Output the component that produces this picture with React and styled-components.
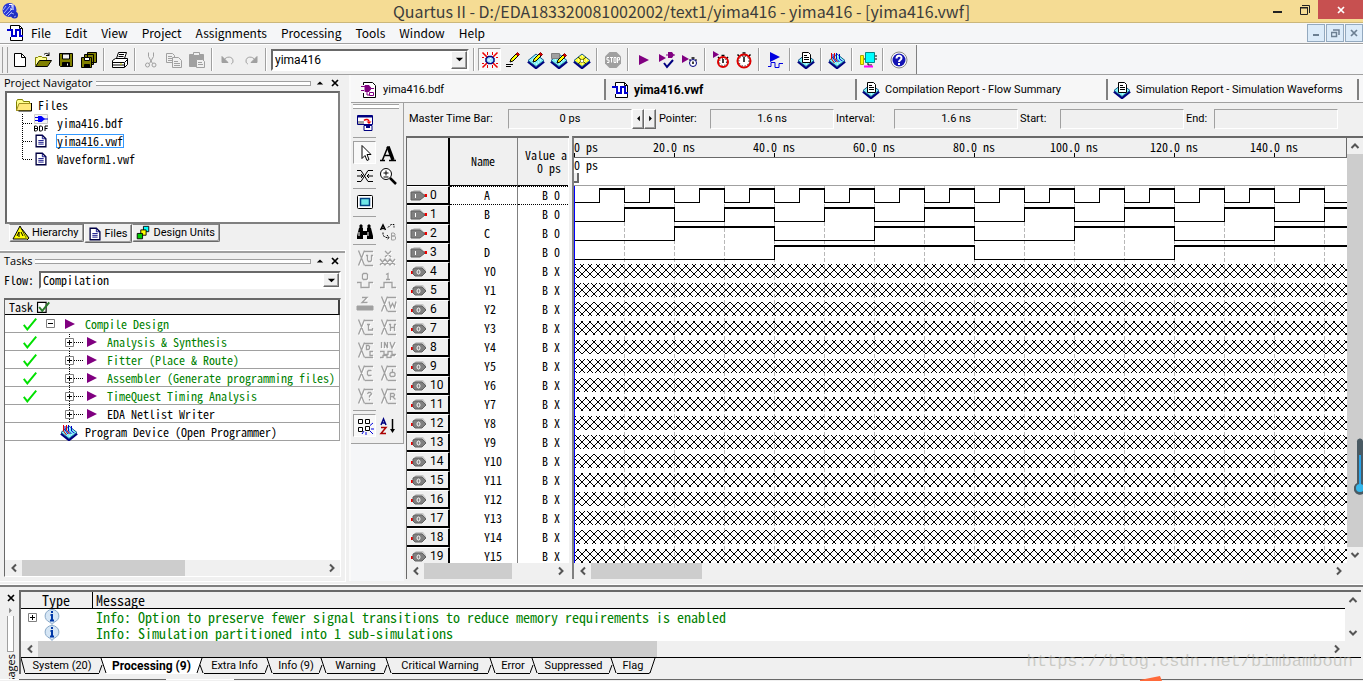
import React, { useEffect, useRef, useState } from "react";
import styled, { createGlobalStyle, css } from "styled-components";

const sans = `Roboto, "Liberation Sans", Arial, sans-serif`;
const ui = `"Noto Sans CJK SC", "Segoe UI", sans-serif`;
const caption = `"Open Sans", "Segoe UI", sans-serif`;
const mono = `"Noto Sans Mono CJK SC", "Liberation Mono", monospace`;

const Global = createGlobalStyle`
  *, *::before, *::after { box-sizing: border-box; }
  body { margin: 0; background: #f0f0f0; color: #000; font: 11px/14px ${sans}; }
  button, input, select { font: inherit; color: inherit; margin: 0; padding: 0; border: 0; background: none; border-radius: 0; }
  svg { display: block; flex: none; }
  table { border-spacing: 0; }
  td, th { padding: 0; font-weight: normal; text-align: left; }
`;

const sunken = css`
  border: 2px solid;
  border-color: #696969 #fff #fff #696969;
`;
const raised = css`
  border: 1px solid;
  border-color: #fff #696969 #696969 #fff;
  box-shadow: inset -1px -1px 0 #a0a0a0;
`;

/* ---------- window frame ---------- */
const Window = styled.div`
  position: relative;
  display: flex;
  flex-direction: column;
  height: 100vh;
  overflow: hidden;
`;
const TitleBar = styled.header`
  display: grid;
  grid-template-columns: 1fr auto 1fr;
  height: 23px;
  background: #f5dc94;
  border-bottom: 1px solid #cbb77c;
`;
const TitleText = styled.h1`
  margin: 0;
  font: 16px/22px ${ui};
  color: #3c3c3c;
  white-space: nowrap;
`;
const TitleIcon = styled.div`
  padding: 2px;
`;
const WindowButtons = styled.div`
  display: flex;
  justify-content: flex-end;
`;
const WindowButton = styled.button`
  display: flex;
  align-items: center;
  justify-content: center;
  width: ${(p) => (p.$close ? 45 : 27)}px;
  height: 19px;
  background: ${(p) => (p.$close ? "#c75050" : "none")};
`;
const MenuBar = styled.nav`
  display: flex;
  align-items: center;
  height: 21px;
  padding-left: 6px;
  background: #f5f6f8;
  border-bottom: 1px solid #a0a0a0;
`;
const MenuButton = styled.button`
  padding: 0 7px;
  font: 12px/18px ${ui};
`;
const MdiButtons = styled.div`
  display: flex;
  gap: 1px;
  margin-left: auto;
`;
const MdiButton = styled.button`
  display: flex;
  align-items: center;
  justify-content: center;
  width: 18px;
  height: 18px;
  background: #dcebf9;
  border: 1px solid #93a9bf;
`;

/* ---------- main toolbar ---------- */
const ToolbarRow = styled.div`
  display: flex;
  height: 31px;
  background: #f5f6f8;
  border-top: 1px solid #fff;
  border-bottom: 1px solid #a0a0a0;
`;
const Toolbar = styled.div`
  display: flex;
  align-items: center;
  padding: 0 6px 0 2px;
  background: #f0f0f0;
  border-right: 1px solid #808080;
`;
const Grip = styled.span`
  width: 6px;
  height: 26px;
  border: 1px solid #a0a0a0;
  border-width: 0 1px 0 1px;
`;
const ToolButton = styled.button`
  display: flex;
  align-items: center;
  justify-content: center;
  width: 23px;
  height: 23px;
  ${(p) => p.$pressed && css`background: #f8f8f8; border: 1px solid; border-color: #a0a0a0 #fff #fff #a0a0a0;`}
`;
const Separator = styled.span`
  width: 2px;
  height: 23px;
  margin: 0 3px;
  border-left: 1px solid #a0a0a0;
  border-right: 1px solid #fff;
`;
const ComboBox = styled.span`
  position: relative;
  display: flex;
  flex: ${(p) => (p.$wide ? 1 : "none")};
  width: ${(p) => (p.$wide ? "auto" : "198px")};
  height: ${(p) => (p.$wide ? 18 : 22)}px;
  margin: ${(p) => (p.$wide ? 0 : "0 1px")};
  background: #fff;
  ${sunken}
`;
const Select = styled.select`
  appearance: none;
  width: 100%;
  padding-left: 2px;
  font: ${(p) => (p.$mono ? `12px/14px ${mono}` : `12px/16px ${sans}`)};
  outline: none;
`;
const ComboArrow = styled.span`
  position: absolute;
  top: 0;
  right: 0;
  bottom: 0;
  display: flex;
  align-items: center;
  justify-content: center;
  width: 16px;
  background: #f0f0f0;
  pointer-events: none;
  ${raised}
`;

/* ---------- docks ---------- */
const Workspace = styled.div`
  display: flex;
  flex: 1;
  min-height: 0;
`;
const Dock = styled.aside`
  display: flex;
  flex-direction: column;
  flex: none;
  width: 351px;
  padding-right: 4px;
  border-right: 2px solid #fafafa;
`;
const DockPanel = styled.section`
  display: flex;
  flex-direction: column;
  flex: ${(p) => (p.$grow ? 1 : "none")};
  min-height: 0;
  padding: 0 4px;
  ${(p) => p.$grow && css`margin-top: 8px; padding-bottom: 4px; border-top: 2px solid #a0a0a0; outline: 1px solid #fff;`}
`;
const DockTitle = styled.header`
  display: flex;
  flex: none;
  align-items: center;
  gap: 3px;
  height: 16px;
`;
const DockHeading = styled.h2`
  margin: 0;
  font: 11px/16px ${caption};
`;
const DockRule = styled.span`
  flex: 1;
  height: 5px;
  border: 1px solid #a0a0a0;
  border-left: 0;
  background: #fff;
`;
const TinyButton = styled.button`
  display: flex;
  flex: none;
  align-items: center;
  justify-content: center;
  width: 12px;
  height: 12px;
`;
const TreeBox = styled.div`
  height: 133px;
  margin: 0 1px;
  padding: 3px 0 0 8px;
  background: #fff;
  ${sunken}
  border-right: 2px solid #808080;
  border-bottom: 2px solid #808080;
`;
const TreeRow = styled.div`
  display: flex;
  align-items: center;
  height: 18px;
  font: 12px/14px ${mono};
`;
const TreeLabel = styled.span`
  margin-left: ${(p) => (p.$root ? 4 : 7)}px;
  border: 1px solid ${(p) => (p.$selected ? "#3399ff" : "transparent")};
  line-height: 12px;
`;
const DockTabs = styled.div`
  display: flex;
  padding-left: 5px;
`;
const DockTab = styled.button`
  display: flex;
  align-items: center;
  gap: 2px;
  height: ${(p) => (p.$active ? 19 : 18)}px;
  padding: 0 4px 0 2px;
  border: 1px solid;
  border-color: ${(p) => (p.$active ? "#f0f0f0" : "#808080")} #696969 #696969 #fff;
  border-radius: 0 0 2px 2px;
  box-shadow: inset -1px -1px 0 #a0a0a0;
`;
const FlowRow = styled.label`
  display: flex;
  flex: none;
  align-items: center;
  gap: 5px;
  height: 18px;
  margin: 2px 0 9px;
  font: 12px/14px ${mono};
`;
const TaskBox = styled.div`
  display: flex;
  flex-direction: column;
  flex: 1;
  min-height: 0;
  background: #fff;
  ${sunken}
  border-width: 2px 1px 1px 1px;
`;
const TaskTable = styled.table`
  width: 100%;
  font: 12px/14px ${mono};
  margin-bottom: auto;
`;
const TaskHead = styled.th`
  height: 15px;
  padding-left: 4px;
  background: #f0f0f0;
  border-bottom: 1px solid #000;
  border-right: 2px solid #404040;
`;
const HeadLine = styled.span`
  display: flex;
  align-items: center;
  gap: 3px;
  height: 14px;
`;
const TaskCell = styled.td`
  height: 18px;
  border-bottom: 1px solid #a0a0a0;
  border-right: 1px solid #a0a0a0;
`;
const TaskLine = styled.span`
  display: flex;
  align-items: center;
  height: 17px;
  padding-left: 17px;
  white-space: nowrap;
  color: ${(p) => (p.$done ? "#007f00" : "#000")};
`;
const Slot = styled.span`
  display: flex;
  align-items: center;
  justify-content: ${(p) => p.$align || "flex-start"};
  width: ${(p) => p.$w}px;
`;

/* ---------- scroll bars ---------- */
const ScrollBar = styled.div`
  display: flex;
  flex: none;
  flex-direction: ${(p) => (p.$vertical ? "column" : "row")};
  align-items: center;
  ${(p) => (p.$vertical ? "width: 16px;" : "height: 16px;")}
  ${(p) => p.$corner && (p.$vertical ? "padding-bottom: 16px;" : "padding-right: 16px;")}
  background: #f0f0f0;
`;
const ScrollButton = styled.button`
  display: flex;
  flex: none;
  align-items: center;
  justify-content: center;
  width: 17px;
  height: 16px;
`;
const ScrollTrack = styled.div`
  display: flex;
  flex: 1;
  flex-direction: ${(p) => (p.$vertical ? "column" : "row")};
  align-self: stretch;
`;
const ScrollThumb = styled.div`
  flex: 0 0 ${(p) => p.$size};
  background: #cdcdcd;
`;

/* ---------- editor ---------- */
const Editor = styled.main`
  display: flex;
  flex-direction: column;
  flex: 1;
  min-width: 0;
`;
const FileTabs = styled.div`
  display: flex;
  flex: none;
  align-items: center;
  height: 28px;
  padding: 2px 0 0 4px;
  background: #f7f7f8;
  border-bottom: 1px solid #a0a0a0;
`;
const FileTab = styled.button`
  display: flex;
  align-items: center;
  gap: 5px;
  flex: 1;
  height: 21px;
  padding-left: 5px;
  background: ${(p) => (p.$active ? "#f0f0f0" : "#f7f7f7")};
  border-right: 2px solid #808080;
  font-size: ${(p) => (p.$active ? 12 : 11)}px;
  font-weight: ${(p) => (p.$active ? "bold" : "normal")};
  white-space: nowrap;
  &:last-child { margin-right: 4px; }
`;
const EditorBody = styled.div`
  display: flex;
  flex: 1;
  min-height: 0;
`;
const PaletteColumn = styled.div`
  flex: none;
  width: 53px;
  background: #f5f6f8;
`;
const Palette = styled.div`
  display: flex;
  flex-wrap: wrap;
  padding: 1px 4px 6px 2px;
  background: #f0f0f0;
  border-right: 1px solid #a0a0a0;
  border-bottom: 1px solid #a0a0a0;
`;
const PaletteGrip = styled.span`
  width: 100%;
  height: 5px;
  margin-bottom: 2px;
  border: 1px solid #a0a0a0;
  border-width: 1px 0;
  background: #fff;
`;
const PaletteRule = styled.span`
  width: 23px;
  margin: ${(p) => (p.$tight ? "1px 22px 1px 0" : "3px 22px 3px 0")};
  border-top: 1px solid #a0a0a0;
`;
const WaveEditor = styled.div`
  display: flex;
  flex-direction: column;
  flex: 1;
  min-width: 0;
  padding: 0 0 2px 2px;
`;
const TimeBar = styled.div`
  display: grid;
  flex: none;
  grid-template-columns: 99px 124px 25px 53px 124px 60px 124px 42px 124px 30px 124px;
  align-items: center;
  height: 33px;
  padding-left: 3px;
  padding-bottom: 2px;
`;
const TimeLabel = styled.span`
  padding-left: ${(p) => (p.$inset ? 2 : 0)}px;
  white-space: nowrap;
`;
const TimeValue = styled.output`
  height: 20px;
  border: 1px solid;
  border-color: #a0a0a0 #fff #fff #a0a0a0;
  line-height: 18px;
  text-align: center;
`;
const SpinPair = styled.span`
  display: flex;
`;
const SpinButton = styled.button`
  display: flex;
  align-items: center;
  justify-content: center;
  width: 12px;
  height: 20px;
  ${raised}
`;
const Panes = styled.div`
  display: flex;
  flex: 1;
  min-height: 0;
`;
const NodePane = styled.div`
  display: flex;
  flex: none;
  flex-direction: column;
  width: 163px;
  background: #fff;
  border-left: 1px solid #696969;
  border-top: 2px solid #696969;
`;
const Clip = styled.div`
  flex: 1;
  min-height: 0;
  overflow: hidden;
`;
const NodeTable = styled.table`
  width: 161px;
  table-layout: fixed;
  font: 12px/13px ${mono};
`;
const NodeHead = styled.th`
  width: ${(p) => p.$w}px;
  height: 48px;
  padding: 0 1px 2px 0;
  background: #f0f0f0;
  text-align: ${(p) => p.$align || "center"};
  white-space: pre;
  border-right: ${(p) => p.$rule};
  border-bottom: 1px solid #000;
`;
const NodeIndex = styled.td`
  height: 19px;
  background: #f0f0f0;
  border-right: 2px solid #000;
  border-bottom: 2px solid #000;
  border-top: 1px solid #fff;
`;
const IndexLine = styled.span`
  display: flex;
  align-items: center;
  gap: 2px;
  height: 16px;
  padding-left: 3px;
  font: 12px/14px ${sans};
`;
const NodeCell = styled.td`
  height: 19px;
  text-align: ${(p) => (p.$value ? "right" : "left")};
  padding: ${(p) => (p.$value ? "0 8px 2px 0" : "0 0 2px 34px")};
  white-space: pre;
  border-right: ${(p) => (p.$value ? "none" : "1px solid #808080")};
  ${(p) => p.$selected && css`border-top: 1px dotted #000; border-bottom: 1px dotted #000;`}
`;
const WavePane = styled.div`
  display: flex;
  flex: 1;
  min-width: 0;
  margin-left: 3px;
  border-left: 2px solid #808080;
  border-top: 2px solid #696969;
`;
const WaveMain = styled.div`
  display: flex;
  flex-direction: column;
  flex: 1;
  min-width: 0;
`;
const Ruler = styled.div`
  display: flex;
  flex: none;
  height: 20px;
  overflow: hidden;
  border-bottom: 1px solid #696969;
  border-right: 1px solid #696969;
`;
const Tick = styled.span`
  display: flex;
  flex: none;
  flex-direction: column;
  align-items: ${(p) => (p.$first ? "flex-start" : "center")};
  width: ${(p) => (p.$first ? 50 : 100)}px;
  padding-top: 3px;
  font: 12px/12px ${mono};
  &::after { content: ""; width: 1px; height: 4px; background: #000; }
`;
const CursorStrip = styled.div`
  flex: none;
  height: 28px;
  background: #fff;
  border-bottom: 1px solid #a0a0a0;
  font: 12px/13px ${mono};
`;
const CursorHandle = styled.span`
  display: block;
  width: 5px;
  height: 10px;
  margin-top: 2px;
  background: #f0f0f0;
  border: 1px solid #696969;
  border-width: 0 2px 2px 0;
`;
const WaveArea = styled.div`
  flex: 1;
  min-height: 0;
  overflow: hidden;
  background: #fff;
`;

/* ---------- messages ---------- */
const Messages = styled.section`
  display: flex;
  flex: none;
  height: 94px;
  margin-top: 4px;
  padding-right: 2px;
  border-top: 2px solid #808080;
  outline: 1px solid #fff;
`;
const MessageGrip = styled.div`
  display: flex;
  flex-direction: column;
  align-items: center;
  width: 19px;
  padding: 5px 0 0 2px;
  overflow: hidden;
`;
const GripLines = styled.span`
  flex: none;
  width: 7px;
  height: 36px;
  margin: 0 0 2px;
  border: 1px solid #a0a0a0;
  border-top: 0;
  background: #fff;
`;
const VerticalTitle = styled.h2`
  flex: none;
  margin: 0;
  font: 11px/14px ${caption};
  writing-mode: vertical-rl;
  transform: rotate(180deg);
`;
const MessageMain = styled.div`
  display: flex;
  flex-direction: column;
  flex: 1;
  min-width: 0;
  height: 84px;
  margin-top: 3px;
  border-left: 2px solid #696969;
  border-top: 2px solid #696969;
`;
const MessageBody = styled.div`
  display: flex;
  flex: 1;
  min-height: 0;
`;
const MessageTable = styled.table`
  align-self: flex-start;
  flex: 1;
  table-layout: fixed;
  font: 14px/14px ${mono};
`;
const MessageHead = styled.th`
  width: ${(p) => (p.$narrow ? "72px" : "auto")};
  height: 17px;
  padding-left: ${(p) => (p.$narrow ? 21 : 3)}px;
  background: #f0f0f0;
  border-right: ${(p) => (p.$narrow ? "1px solid #000" : "none")};
  border-bottom: 1px solid #000;
`;
const MessageCell = styled.td`
  height: 16px;
  padding-left: 3px;
  background: #fff;
  color: #007f00;
  white-space: nowrap;
`;
const TypeLine = styled.span`
  display: flex;
  align-items: center;
  gap: 7px;
  height: 16px;
  padding-left: 4px;
`;
const MessageTabs = styled.div`
  display: flex;
  flex: none;
  height: 17px;
  border-top: 1px solid #000;
`;
const MessageTab = styled.button`
  width: ${(p) => p.$w}px;
  height: 16px;
  white-space: nowrap;
  border-bottom: 1px solid ${(p) => (p.$active ? "#fff" : "#000")};
  background: ${(p) => (p.$active ? "#fff" : "none")};
  font-size: ${(p) => (p.$active ? 12 : 11)}px;
  font-weight: ${(p) => (p.$active ? "bold" : "normal")};
`;
const StatusBar = styled.footer`
  display: flex;
  flex: none;
  gap: 8px;
  height: 2px;
  padding-left: 19px;
`;
const StatusPart = styled.span`
  flex: ${(p) => (p.$w ? `0 0 ${p.$w}px` : 1)};
  border-top: 1px solid ${(p) => (p.$light ? "#fff" : "#696969")};
`;

/* ---------- overlays ---------- */
const Watermark = styled.span`
  position: absolute;
  right: 10px;
  bottom: 7px;
  font: 17px/24px "Liberation Mono", monospace;
  color: rgba(170, 170, 160, 0.55);
  pointer-events: none;
`;
const Gauge = styled.span`
  position: absolute;
  right: 0;
  top: 438px;
`;
const Ember = styled.span`
  position: absolute;
  right: 201px;
  bottom: 0;
`;

/* ---------- icons ---------- */
const Ico = ({ s = 18, children, ...rest }) => (
  <svg width={s} height={s} viewBox="0 0 18 18" fill="none" stroke="#000" aria-hidden="true" {...rest}>
    {children}
  </svg>
);
const Diamond = ({ fill = "#7df3f5" }) => (
  <>
    <path d="M1 10.500l8 6.500 8-6.500" stroke="#000080" strokeWidth="2.500" />
    <path d="M1 9.500 9 3l8 6.500-8 6z" fill={fill} stroke="#1a5a90" />
    <path d="M5 9h1M7 7h1M9 9h1M11 7h1M13 9h1M7 11h1M11 11h1M9 13h1M9 5h1" stroke="#fff" />
  </>
);
const Sheet = () => (
  <>
    <path d="M5.500 1.500h6l2 2v8h-8z" fill="#fff" />
    <path d="M7 4.500h3M7 6.500h5M7 8.500h5" />
  </>
);
const Pencil = ({ x = 0, y = 0 }) => (
  <g transform={`translate(${x} ${y})`}>
    <path d="M6 11l1-3 6-6 2 2-6 6z" fill="#ff0" />
    <path d="M12 3l1.500-1.500 2 2L14 5z" fill="#d00" stroke="#800" />
  </g>
);
const Clock = ({ cx, cy, r, c = "#d00" }) => (
  <>
    <path d={`M${cx - 1.500} ${cy - r - 1.500}h3M${cx - r} ${cy - r}l1.500 1.500M${cx + r} ${cy - r}l-1.500 1.500`} strokeWidth="1.500" />
    <circle cx={cx} cy={cy} r={r} fill="#fff" stroke={c} strokeWidth={r > 4 ? 2 : 1} />
    {r > 4 && <circle cx={cx} cy={cy} r={r - 1.5} stroke="#000" strokeDasharray="1 2" />}
    <path d={`M${cx} ${cy + 1}V${cy - r + 2}`} strokeWidth="1.500" />
  </>
);
const purple = "#800080";
const icons = {
  new: <Ico><path d="M3.500 2.500h7l4 4v9h-11z" fill="#fff" /><path d="M10.500 2.500v4h4" /></Ico>,
  open: <Ico><path d="M1.500 14.500v-8h2l1-1h3l1 1h4v3" fill="#ffff9c" stroke="#808000" /><path d="M1.500 15.500l4-6h12l-4 6z" fill="#808000" /><path d="M10 3.500c2-2 4-1 5 1m0-3v3h-3" /></Ico>,
  save: <Ico><path d="M2.500 2.500h13v13h-12l-1-1z" fill="#808000" /><path d="M5.500 3h7v5h-7z" fill="#f0f0f0" /><path d="M5.500 11.500h7V15h-7z" fill="#000" /><path d="M10.500 12.500v2" stroke="#fff" /></Ico>,
  saveAll: <Ico><path d="M7.500 1.500h9v10h-9zM4.500 3.500h9v10h-9z" fill="#808000" /><path d="M1.500 6.500h10v10h-10z" fill="#808000" /><path d="M4.500 6.500h5v3h-5zM7.500 3.500h4M10 1.500h4" fill="#fff" /><path d="M4.500 13.500h5V16h-5z" fill="#000" /></Ico>,
  print: <Ico><path d="M5.500 7.500l2-6h8l-2 6" fill="#fff" /><path d="M8 3.500h5M7.500 5.500h5" /><path d="M1.500 9.500l3-2h12v6l-3 3h-12z" fill="#fff" /><path d="M1.500 11.500h12l3-3M1.500 14h12M13.500 12v4" /><path d="M9 13h2" stroke="#cc0" /></Ico>,
  cut: <Ico stroke="#a0a0a0"><path d="M6.500 1.500v4l4 7M11.500 1.500v4l-4 7" /><circle cx="5.500" cy="14" r="2" /><circle cx="12" cy="14" r="2" /></Ico>,
  copy: <Ico stroke="#a0a0a0"><path d="M1.500 2.500h6l2 2v7h-8zM3 5.500h4M3 7.500h4M3 9.500h4" /><path d="M7.500 6.500h6l3 3v7h-9z" fill="#f0f0f0" /><path d="M9 10.500h4M9 12.500h6M9 14.500h6" /></Ico>,
  paste: <Ico stroke="#a0a0a0"><path d="M1.500 3.500h14v12h-14z" fill="#a0a0a0" /><path d="M5.500 1.500h6v3h-6z" fill="#f0f0f0" /><path d="M8.500 8.500h6l2 2v6h-8z" fill="#f0f0f0" /><path d="M10 11.500h4M10 13.500h5" /></Ico>,
  undo: <Ico stroke="#a0a0a0"><path d="M5 9c2-4 9-4 9 1 0 2-1 2.500-2 3" /><path d="M3 5.500v6h6z" fill="#a0a0a0" /></Ico>,
  redo: <Ico stroke="#a0a0a0"><path d="M13 9c-2-4-9-4-9 1 0 2 1 2.500 2 3" /><path d="M15 5.500v6H9z" fill="#a0a0a0" /></Ico>,
  settings: <Ico><path d="M1.500 1.500l5 5M16.500 1.500l-5 5M1.500 16.500l5-5M16.500 16.500l-5-5" stroke="#e00" strokeWidth="1.500" /><path d="M6.500 1v3M11.500 1v3M6.500 14v3M11.500 14v3M1 6.500h2M15 6.500h2M1 12.500h2M15 12.500h2" stroke="#e00" /><path d="M7.500 5.500h3l2.500 2v3l-2.500 2h-3l-2.500-2v-3z" fill="#9fe8ff" stroke="#000080" strokeWidth="1.500" /><path d="M7 9h2M9 7.500h1M9 11h1" stroke="#fff" /></Ico>,
  edit: <Ico><Pencil /><path d="M2 13.500h7M2 15.500h5" /></Ico>,
  assign: <Ico><Diamond /><Pencil /></Ico>,
  pins: <Ico><Diamond /><path d="M1.500 2.500h8v5h-8z" fill="#a0a0a0" stroke="#808080" /><Pencil x={1} y={1} /></Ico>,
  floor: <Ico><Diamond fill="#ffff30" /><path d="M5 6l8 7M13 6l-8 7" stroke="#330" /><path d="M9 8l2 2-2 2-2-2zM6 7l2 1.500M12 7l-2 1.500" fill="#fff" stroke="#550" strokeWidth=".5" /></Ico>,
  stop: <Ico><path d="M5.500 1h7L17 5.500v7L12.500 17h-7L1 12.500v-7z" fill="#a0a0a0" stroke="none" /><path d="M5 6.500H3v2.500h2v2.500H3M6 6.500h3M7.500 6.500v5M10 6.500h2v5h-2zM13.500 12V6.500h2V9h-2" stroke="#fff" /></Ico>,
  start: <Ico><path d="M4 4v10l10-5z" fill={purple} stroke="none" /></Ico>,
  analyze: <Ico><path d="M1 3v8l7-4z" fill={purple} stroke="none" /><path d="M8 4h3M15 4h2" stroke={purple} /><path d="M10 1h4l2 3-2 3h-4z" fill={purple} stroke="none" /><path d="M6 12l3 4 6-7" stroke="#000080" strokeWidth="2" /></Ico>,
  timing: <Ico><path d="M1 4v8l7-4z" fill={purple} stroke="none" /><Clock cx={12} cy={12} r={3.5} c="#000080" /></Ico>,
  simTime: <Ico><path d="M1 0v7l6-3.500z" fill={purple} stroke="none" /><Clock cx={11} cy={11} r={5} /></Ico>,
  clock: <Ico><Clock cx={9} cy={10} r={6.5} /></Ico>,
  simulate: <Ico><path d="M4 1v10l10-5z" fill="#0000e0" stroke="none" /><path d="M2 15.500h3v-4h4v5h4v-4h4" stroke="#0000e0" /></Ico>,
  report: <Ico><Diamond /><Sheet /></Ico>,
  program: <Ico><Diamond /><path d="M3.500 2v6l3 4M6.500 2v5l3 4" stroke="#d00" /><path d="M5 3v4l3 4M8.500 2v6l3 3M11.500 3v5l3 2" stroke="#00c" /></Ico>,
  board: <Ico><path d="M6.500 1.500h9v10h-9z" fill="#0ff" stroke="#088" /><path d="M1.500 4.500h3v9h-3z" fill="#ff0" stroke="#aa0" /><path d="M16 5h2M16 8h2M5 8h1M9 12v2h4" /><path d="M5 15.500h9" stroke="#f0f" strokeWidth="2" /></Ico>,
  help: <Ico><circle cx="9" cy="9" r="8" stroke="#888" fill="#fff" /><circle cx="9" cy="9" r="6.500" fill="#1414b4" stroke="none" /><path d="M6.500 7.500c0-3.500 5-3.500 5-.5 0 2-2.500 2-2.500 4M9 12v2" stroke="#fff" strokeWidth="2" /></Ico>,
  wave: <Ico><path d="M4.500 5V1.500h9l3 3v12h-12V13" fill="#fff" /><path d="M13.500 1.500v3h3" /><path d="M1 6h5v6h4V6h4v6h3" stroke="#0000d0" strokeWidth="2" /></Ico>,
  bdfFile: <Ico><path d="M3.500 4V1.500h9l3 3v12h-12V12" fill="#fff" /><path d="M1 5.500h4M1 9.500h3M11 7.500h3" stroke={purple} /><path d="M5 4.500h4l2 3-2 3H5z" fill={purple} stroke={purple} /><path d="M9.500 11.500h4v3h-4zM7 10v4h3" stroke={purple} /></Ico>,
  folder: <Ico><path d="M1.500 5.500l1-2h5l1 2h6v9h-13z" fill="#ffff8c" stroke="#808000" /><path d="M1.500 14.500L4 7.500h12.500v7z" fill="#ffe97a" stroke="#a09020" /><path d="M16.500 7v8h-13" /></Ico>,
  bdf: <Ico><path d="M2.500.5h13v9h-13z" fill="#f4f4f4" stroke="#ccc" /><path d="M3 3.500h3M3 6.500h3M12 5h4" stroke="#00d" /><path d="M6 2h3.500L13 5 9.500 8H6z" fill="#00f" stroke="none" /><path d="M2.500 12v5h2l1-1v-3l-1-1zM7.500 12v5h2l1-1v-3l-1-1zM13 17v-5h3M13 14.500h2.500M2.500 14.500h3" /></Ico>,
  doc: <Ico s={16}><path d="M3.500 2.500h7l4 4v9h-11z" fill="#fff" stroke="#000040" strokeWidth="1.500" /><path d="M10.500 2.500v4h4M6 8.500h6M6 10.500h6M6 12.500h6" stroke="#000080" /></Ico>,
  hierarchy: <Ico><path d="M8 2l7 13H1z" fill="#ff0" /><path d="M10 5l7 9-2 2" fill="#cc0" /><path d="M5 12l2-4v5M9 8l2 4" /></Ico>,
  units: <Ico s={16}><path d="M9.500 1.500h6v6h-6z" fill="#0ff" /><path d="M6.500 5.500h6v6h-6z" fill="#ff0" /><path d="M2.500 9.500h6v6h-6z" fill="#0c0" /></Ico>,
  check: <Ico s={16}><path d="M2 10l4 5L16 3" stroke="#00e000" strokeWidth="2.200" /></Ico>,
  headCheck: <Ico s={14}><path d="M2 3h11v13H2z" fill="#fff" strokeWidth="1.500" /><path d="M4 9l4 5 9-11" stroke="#2a7a2a" strokeWidth="2.500" /></Ico>,
  task: <Ico><path d="M3 4v10l10-5z" fill={purple} stroke="none" /></Ico>,
  detach: <Ico><path d="M1.500 1.500h15v9h-15z" fill="#fff" stroke="#000080" /><path d="M2 2.500h14" stroke="#000080" strokeWidth="2" /><path d="M2 7h6v3H2z" fill="#a0a0a0" stroke="none" /><path d="M8 6.500c2-2 5-1 5 1" stroke="#e00" strokeWidth="1.500" /><path d="M10.500 7.500h5L13 10z" fill="#e00" stroke="none" /><path d="M8 11.500h8v5H8z" fill="#fff" stroke="#000080" /><path d="M10 12h4v2h-4z" fill="#000080" stroke="none" /></Ico>,
  pointer: <Ico><path d="M6 1.500v13l3-3 2 5 2-1-2-5h4z" fill="#fff" /></Ico>,
  text: <Ico><path d="M1 16.500h5M10 16.500h7M3.500 16L9 2.500M6 11.500h6" strokeWidth="1.500" /><path d="M9 2.500L14 16" strokeWidth="3.500" /></Ico>,
  swap: <Ico><path d="M1 3.500h4l7 11h5M1 14.500h4l7-11h5M1 9h6M11 9h6M5 7l2 2-2 2M13 7l-2 2 2 2" /></Ico>,
  zoom: <Ico><circle cx="7" cy="7" r="5.500" fill="#fff" /><path d="M4.500 6h5M7 3.500v5M4.500 10h5" /><path d="M11 11l6 6" strokeWidth="2.500" /></Ico>,
  screen: <Ico><rect x="1.500" y="2.500" width="15" height="13" rx="1" fill="#fff" /><path d="M4.500 5.500h9v7h-9z" fill="#6fe6e6" stroke="#004080" strokeWidth="1.500" /></Ico>,
  find: <Ico><path d="M3 5h4v3h4V5h4l2 8v3h-6v-4H7v4H1v-3z" fill="#000" stroke="none" /><path d="M4 2h2v3H4zM12 2h2v3h-2z" fill="#000" /><path d="M3 9v4M12 9v4" stroke="#fff" /></Ico>,
  replace: <Ico><path d="M1.500 7L4 2l2.500 5M2.500 5.500h3" strokeWidth="1.500" /><path d="M9 4.500l3-3h3v3" strokeDasharray="2 1" /><path d="M4 9.500v3l3 2h3M8 12l2 2.500L8 17" strokeDasharray="2 1" /><path d="M12.500 10v7h3l1-1v-2l-1-1h-3 3l.5-1v-1l-1-1z" stroke="#a0a0a0" /></Ico>,
  grid: <Ico><path d="M2.500 2.500h4v4h-4zM9.500 2.500h4v4h-4zM2.500 10.500h4v4h-4zM9.500 9.500h4v4h-4z" fill="#fff" /><path d="M14 8.500l3-2.500M15 12h3M14 14l3 3M10 15v3M8 14l-2 3" stroke="#00d" /></Ico>,
  sort: <Ico><path d="M2 8L4.500 2 7 8M3 6h3" stroke="#000080" strokeWidth="1.500" /><path d="M2 10.500h5l-5 6h5" stroke="#a00" strokeWidth="1.500" /><path d="M13.500 2v12" strokeWidth="1.500" /><path d="M11 12h5l-2.500 4z" fill="#000" stroke="none" /></Ico>,
};
const GreyIcon = styled(Ico).attrs({ stroke: "#a0a0a0" })``;
const fork = "M2.500 1.500l6 15M8.500 1.500l-6 15M9 2.500h8M9 16.500h8";
const greyShapes = {
  unknown: fork + "M11.500 6v5l1 1.500h2l1-1.500V6M10 6.500h2M15 6.500h2",
  invalid: "M6 2l6 6M12 2L6 8M1 16l5-6 5 6 5-6M1 10l5 6 5-6 5 6",
  low: "M7.500 1.500h3l1 1v4l-1 1h-3l-1-1v-4zM1 10.500h4v5h8v-5h4",
  high: "M7 2.500l2-1v6M7 7.500h4M1 15.500h4v-5h8v5h4",
  highZ: "M6 2.500h5l-5 5h5.500",
  weak: fork + "M10 6.500l1.500 6 2-4 2 4 1.500-6",
  weakLow: fork + "M12.500 6v6h4v-2M11 6.500h3",
  weakHigh: fork + "M11.500 6v7M15.500 6v7M12 9.500h4M10 6.500h2M15 6.500h2",
  dontCare: fork + "M10.500 4.500v4h2l1-1v-2l-1-1zM17 10.500h-3v4h3",
  invert: "M2.500 1v6M5.500 7V1l3 6V1M11 1l2 6 3-6M1 10.500h4v3h4v-3h4v3h4M1 16.500h3v-2h4v2h4v-2h4",
  count: fork + "M15.500 7l-1-.5h-2l-1 1v3l1 1h2l1-.5",
  clockWave: fork + "M13.500 5v3M12 8.500h3l1 1v2l-1 1h-3l-1-1v-2z",
  arbitrary: fork + "M11.500 7l1-1.500h2l1 1.500-2 2v1.500M13.500 12v1.500",
  random: fork + "M11.500 13V6.500h3l1 1v1l-1 1h-3 2l3 3",
};
const Grey = ({ name }) => (
  <GreyIcon>
    <path d={greyShapes[name]} stroke="#fff" transform="translate(1 1)" />
    <path d={greyShapes[name]} strokeWidth="1.300" />
    {name === "highZ" && <path d="M1 11h16v4H1z" fill="#a0a0a0" />}
  </GreyIcon>
);

const PinIcon = ({ output }) => (
  <svg width="18" height="13" viewBox="0 0 18 13" fill="none" aria-hidden="true">
    {output ? <path d="M1 6h3v3H1z" fill="#e00" /> : <path d="M14 5h3v3h-3z" fill="#e00" />}
    <path d={output ? "M4 3l2-2h7l3 4v3z" : "M2 3l2-2h6l5 5v1z"} fill="#c8c8c8" />
    <path d={output ? "M3 4l2-1h7l4 4-4 4H5L3 9z" : "M1 3h9l5 4-5 4H1z"} fill="#808080" stroke="#606060" />
    {output ? <ellipse cx="8.500" cy="7" rx="1.500" ry="2" stroke="#fff" /> : <path d="M5.500 5v4" stroke="#fff" />}
  </svg>
);
const Expander = ({ open }) => (
  <svg width="9" height="9" viewBox="0 0 9 9" aria-hidden="true">
    <path d="M.5.5h8v8h-8z" fill="#fff" stroke="#808080" />
    <path d={open ? "M2 4.500h5" : "M2 4.500h5M4.500 2v5"} stroke="#000" />
  </svg>
);
const Branch = ({ last }) => (
  <svg width="18" height="18" aria-hidden="true">
    <path d={last ? "M7.500 0v9M8 9.500h10" : "M7.500 0v18M8 9.500h10"} stroke="#000" strokeDasharray="1 1" />
  </svg>
);
const TaskBranch = ({ first }) => (
  <svg width="18" height="18" aria-hidden="true">
    <path d={`M4.500 ${first ? -1 : 0}v18M9 9.500h9`} stroke="#000" strokeDasharray="1 1" />
    <path d="M.5 5.500h8v8h-8z" fill="#fff" stroke="#808080" />
    <path d="M2 9.500h5M4.500 7v5" stroke="#000" />
  </svg>
);
const InfoIcon = () => (
  <svg width="16" height="16" viewBox="0 0 16 16" aria-hidden="true">
    <path d="M8 .5a7 6.500 0 0 1 2 12.700L8 15.500l-2-2.300A7 6.500 0 0 1 8 .5z" fill="#d6e6f5" stroke="#88a8c8" />
    <path d="M8 2v2M6.500 6H8v5M6 11.500h4" stroke="#0038a8" strokeWidth="2" fill="none" />
  </svg>
);
const Arrow = ({ dir, size = 10, thick, color = "#000" }) => {
  const turn = { up: 0, right: 90, down: 180, left: 270 }[dir];
  return (
    <svg width={size} height={size} viewBox="0 0 10 10" aria-hidden="true">
      <g transform={`rotate(${turn} 5 5)`}>
        {thick ? <path d="M1 7l4-4 4 4z" fill={color} /> : <path d="M1.500 7L5 3.500 8.500 7" fill="none" stroke="#555" strokeWidth="2" />}
      </g>
    </svg>
  );
};
const Cross = ({ color = "#000", size = 8 }) => (
  <svg width={size} height={size} viewBox="0 0 8 8" aria-hidden="true">
    <path d="M1 1l6 6M7 1L1 7" stroke={color} strokeWidth="1.700" />
  </svg>
);
const TabEdge = ({ kind }) => {
  const w = kind === "first" ? 4 : 8;
  return (
    <svg width={w} height="16" viewBox={`0 0 ${w} 16`} fill="none" stroke="#000" aria-hidden="true">
      {kind === "intoActive" && <path d="M2 0h6v16H7z" fill="#fff" stroke="none" />}
      {kind === "outOfActive" && <path d="M0 0h6L1 16H0z" fill="#fff" stroke="none" />}
      {kind === "first" && <path d="M0 0l4 15" />}
      {kind === "last" && <path d="M0 15h1L6 0" />}
      {kind === "intoActive" && <path d="M2 0l5 15M0 15l3-8" />}
      {kind === "outOfActive" && <path d="M6 0L1 15M4 7l3 8" />}
      {!kind && <path d="M2 0l5 15M0 15l3-8" />}
    </svg>
  );
};

/* ---------- parts ---------- */
const Scroll = ({ vertical, size, corner }) => (
  <ScrollBar $vertical={vertical} $corner={corner}>
    <ScrollButton aria-label={vertical ? "Scroll up" : "Scroll left"}><Arrow dir={vertical ? "up" : "left"} /></ScrollButton>
    <ScrollTrack $vertical={vertical}><ScrollThumb $size={size} /></ScrollTrack>
    <ScrollButton aria-label={vertical ? "Scroll down" : "Scroll right"}><Arrow dir={vertical ? "down" : "right"} /></ScrollButton>
  </ScrollBar>
);
const DockHeader = ({ title }) => (
  <DockTitle>
    <DockHeading>{title}</DockHeading>
    <DockRule />
    <TinyButton aria-label="Collapse"><Arrow dir="up" size={8} thick /></TinyButton>
    <TinyButton aria-label="Close"><Cross /></TinyButton>
  </DockTitle>
);

const menus = ["File", "Edit", "View", "Project", "Assignments", "Processing", "Tools", "Window", "Help"];
const toolsLeft = ["new", "open", "save", "saveAll", "|", "print", "|", "cut", "copy", "paste", "|", "undo", "redo", "|"];
const toolsRight = ["|", "settings", "edit", "assign", "pins", "floor", "|", "stop", "|", "start", "analyze", "timing", "|", "simTime", "clock", "|", "simulate", "|", "report", "|", "program", "|", "board", "|", "help"];
const renderTools = (list) =>
  list.map((n, i) => (n === "|" ? <Separator key={i} /> : <ToolButton key={i} aria-label={n} $pressed={n === "settings"}>{icons[n]}</ToolButton>));

const files = [
  { name: "yima416.bdf", icon: "bdf" },
  { name: "yima416.vwf", icon: "doc", selected: true },
  { name: "Waveform1.vwf", icon: "doc" },
];
const tasks = [
  { name: "Analysis & Synthesis", done: true },
  { name: "Fitter (Place & Route)", done: true },
  { name: "Assembler (Generate programming files)", done: true },
  { name: "TimeQuest Timing Analysis", done: true },
  { name: "EDA Netlist Writer" },
];
const fileTabs = [
  { name: "yima416.bdf", icon: "bdfFile" },
  { name: "yima416.vwf", icon: "wave", active: true },
  { name: "Compilation Report - Flow Summary", icon: "report" },
  { name: "Simulation Report - Simulation Waveforms", icon: "report" },
];
const greyTools = Object.keys(greyShapes);
const nodes = ["A", "B", "C", "D", ...Array.from({ length: 16 }, (_, i) => `Y${i}`)];
const ROW = 19;
const SPAN = 2400;

const squareWave = (half, top) => {
  let d = `M0 ${top + 16.5}`;
  for (let x = half, high = true; x < SPAN; x += half, high = !high) {
    d += `H${x}.5V${high ? top + 3 : top + 16.5}`;
  }
  return d + `H${SPAN}`;
};
const highLevels = (half, top) => {
  let d = "";
  for (let x = half; x < SPAN; x += half * 2) d += `M${x} ${top + 3}H${x + half + 1}`;
  return d;
};
const Waveforms = () => (
  <svg width="100%" height={nodes.length * ROW} shapeRendering="crispEdges" role="img" aria-label="Signal waveforms">
    <defs>
      <pattern id="hatch" width="8" height="8" patternUnits="userSpaceOnUse">
        {Array.from({ length: 8 }, (_, i) => (
          <path key={i} d={`M${i} ${i}h1v1h-1zM${7 - i} ${i}h1v1h-1z`} />
        ))}
      </pattern>
    </defs>
    {Array.from({ length: SPAN / 50 }, (_, i) => (
      <path key={i} d={`M${(i + 1) * 50}.5 0V400`} stroke="#b8b8b8" strokeDasharray="4 2" />
    ))}
    {nodes.slice(0, 4).map((n, i) => (
      <g key={n} fill="none" stroke="#000">
        <path d={squareWave(25 * 2 ** i, i * ROW)} />
        <path d={highLevels(25 * 2 ** i, i * ROW)} strokeWidth="2" />
      </g>
    ))}
    {nodes.slice(4).map((n, i) => (
      <rect key={n} x="0" y={(i + 4) * ROW + 2} width="100%" height="14" fill="url(#hatch)" />
    ))}
    <path d="M.5 0V400" stroke="#0000ff" />
  </svg>
);

const TimeRuler = () => {
  const ref = useRef(null);
  const [count, setCount] = useState(7);
  useEffect(() => {
    const watcher = new ResizeObserver(([entry]) => {
      setCount(Math.max(0, Math.floor((entry.contentRect.width - 24) / 100)));
    });
    watcher.observe(ref.current);
    return () => watcher.disconnect();
  }, []);
  return (
    <Ruler ref={ref}>
      <Tick $first>0 ps</Tick>
      {Array.from({ length: count }, (_, i) => <Tick key={i}>{`${(i + 1) * 20}.0 ns`}</Tick>)}
    </Ruler>
  );
};

const messageTabs = [
  ["System (20)", 74], ["Processing (9)", 89], ["Extra Info", 61], ["Info (9)", 46], ["Warning", 57],
  ["Critical Warning", 96], ["Error", 34], ["Suppressed", 71], ["Flag", 32],
];

export default function App() {
  return (
    <Window>
      <Global />
      <TitleBar>
        <TitleIcon>
          <svg width="18" height="18" viewBox="0 0 18 18" aria-hidden="true">
            <circle cx="7.500" cy="8" r="7" fill="#2a38d8" />
            <path d="M1 8l3-4M2 11L8 4M4 13l6-6M6 14l4-4" stroke="#a9b8f4" />
            <path d="M7 2.500h3v3M11 2v4M8 7h4" stroke="#fff" fill="none" />
            <circle cx="12.500" cy="13" r="3.500" fill="#2030c0" />
            <path d="M9 11l3 1M12 15l2-1" stroke="#8fa0f0" />
          </svg>
        </TitleIcon>
        <TitleText>Quartus II - D:/EDA183320081002002/text1/yima416 - yima416 - [yima416.vwf]</TitleText>
        <WindowButtons>
          <WindowButton aria-label="Minimize"><svg width="9" height="9"><path d="M0 7h9" stroke="#222" strokeWidth="2" /></svg></WindowButton>
          <WindowButton aria-label="Restore"><svg width="10" height="10" fill="none" stroke="#222"><path d="M.5 3h7v6.500h-7zM0 2.500h8M2 .5h7.500V8" /></svg></WindowButton>
          <WindowButton $close aria-label="Close"><Cross color="#fff" /></WindowButton>
        </WindowButtons>
      </TitleBar>
      <MenuBar>
        {icons.wave}
        {menus.map((m) => <MenuButton key={m}>{m}</MenuButton>)}
        <MdiButtons>
          <MdiButton aria-label="Minimize document"><svg width="8" height="8"><path d="M1 6h6" stroke="#6c7f92" strokeWidth="2" /></svg></MdiButton>
          <MdiButton aria-label="Restore document"><svg width="9" height="9" fill="none" stroke="#6c7f92"><path d="M.5 3.500h5v4h-5zM2 1h6v5" strokeWidth="1.500" /></svg></MdiButton>
          <MdiButton aria-label="Close document"><Cross color="#6c7f92" /></MdiButton>
        </MdiButtons>
      </MenuBar>
      <ToolbarRow>
        <Toolbar>
          <Grip />
          {renderTools(toolsLeft)}
          <ComboBox>
            <Select aria-label="Project revision"><option>yima416</option></Select>
            <ComboArrow><Arrow dir="down" size={9} thick /></ComboArrow>
          </ComboBox>
          {renderTools(toolsRight)}
        </Toolbar>
      </ToolbarRow>

      <Workspace>
        <Dock>
          <DockPanel>
            <DockHeader title="Project Navigator" />
            <TreeBox>
              <TreeRow>{icons.folder}<TreeLabel $root>Files</TreeLabel></TreeRow>
              {files.map((f, i) => (
                <TreeRow key={f.name}>
                  <Branch last={i === files.length - 1} />
                  <Slot $w={16} $align="center">{icons[f.icon]}</Slot>
                  <TreeLabel $selected={f.selected}>{f.name}</TreeLabel>
                </TreeRow>
              ))}
            </TreeBox>
            <DockTabs>
              <DockTab>{icons.hierarchy}Hierarchy</DockTab>
              <DockTab $active>{icons.doc}Files</DockTab>
              <DockTab>{icons.units}Design Units</DockTab>
            </DockTabs>
          </DockPanel>
          <DockPanel $grow>
            <DockHeader title="Tasks" />
            <FlowRow>
              Flow:
              <ComboBox $wide>
                <Select $mono><option>Compilation</option></Select>
                <ComboArrow><Arrow dir="down" size={9} thick /></ComboArrow>
              </ComboBox>
            </FlowRow>
            <TaskBox>
              <TaskTable>
                <thead><tr><TaskHead><HeadLine>Task{icons.headCheck}</HeadLine></TaskHead></tr></thead>
                <tbody>
                  <tr><TaskCell><TaskLine $done>
                    <Slot $w={24}>{icons.check}</Slot><Slot $w={16}><Expander open /></Slot><Slot $w={23}>{icons.task}</Slot>Compile Design
                  </TaskLine></TaskCell></tr>
                  {tasks.map((t, i) => (
                    <tr key={t.name}><TaskCell><TaskLine $done={t.done}>
                      <Slot $w={43}>{t.done && icons.check}</Slot><Slot $w={19}><TaskBranch first={i === 0} /></Slot><Slot $w={23}>{icons.task}</Slot>{t.name}
                    </TaskLine></TaskCell></tr>
                  ))}
                  <tr><TaskCell><TaskLine>
                    <Slot $w={38} /><Slot $w={25}>{icons.program}</Slot>Program Device (Open Programmer)
                  </TaskLine></TaskCell></tr>
                </tbody>
              </TaskTable>
              <Scroll size="54%" />
            </TaskBox>
          </DockPanel>
        </Dock>

        <Editor>
          <FileTabs>
            {fileTabs.map((t) => <FileTab key={t.name} $active={t.active}>{icons[t.icon]}{t.name}</FileTab>)}
          </FileTabs>
          <EditorBody>
            <PaletteColumn>
              <Palette>
                <PaletteGrip />
                <ToolButton aria-label="Detach window">{icons.detach}</ToolButton>
                <PaletteRule />
                <ToolButton aria-label="Selection tool" $pressed>{icons.pointer}</ToolButton>
                <ToolButton aria-label="Text tool">{icons.text}</ToolButton>
                <ToolButton aria-label="Waveform editing tool">{icons.swap}</ToolButton>
                <ToolButton aria-label="Zoom tool">{icons.zoom}</ToolButton>
                <PaletteRule $tight />
                <ToolButton aria-label="Full screen">{icons.screen}</ToolButton>
                <PaletteRule />
                <ToolButton aria-label="Find">{icons.find}</ToolButton>
                <ToolButton aria-label="Replace">{icons.replace}</ToolButton>
                <PaletteRule $tight />
                {greyTools.map((g) => <ToolButton key={g} aria-label={g}><Grey name={g} /></ToolButton>)}
                <PaletteRule />
                <ToolButton aria-label="Snap to grid" $pressed>{icons.grid}</ToolButton>
                <ToolButton aria-label="Sort">{icons.sort}</ToolButton>
              </Palette>
            </PaletteColumn>
            <WaveEditor>
              <TimeBar>
                <TimeLabel>Master Time Bar:</TimeLabel>
                <TimeValue>0 ps</TimeValue>
                <SpinPair>
                  <SpinButton aria-label="Previous transition"><Arrow dir="left" size={7} thick /></SpinButton>
                  <SpinButton aria-label="Next transition"><Arrow dir="right" size={7} thick /></SpinButton>
                </SpinPair>
                <TimeLabel $inset>Pointer:</TimeLabel>
                <TimeValue>1.6 ns</TimeValue>
                <TimeLabel $inset>Interval:</TimeLabel>
                <TimeValue>1.6 ns</TimeValue>
                <TimeLabel $inset>Start:</TimeLabel>
                <TimeValue />
                <TimeLabel $inset>End:</TimeLabel>
                <TimeValue />
              </TimeBar>
              <Panes>
                <NodePane>
                  <Clip>
                    <NodeTable>
                      <thead>
                        <tr>
                          <NodeHead $w={43} $rule="2px solid #000" aria-label="Index" />
                          <NodeHead $w={68} $rule="1px solid #808080">Name</NodeHead>
                          <NodeHead $w={50} $align="right" $rule="none">{"Value a\n0 ps "}</NodeHead>
                        </tr>
                      </thead>
                      <tbody>
                        {nodes.map((n, i) => (
                          <tr key={n}>
                            <NodeIndex><IndexLine><PinIcon output={i > 3} />{i}</IndexLine></NodeIndex>
                            <NodeCell $selected={i === 0}>{n}</NodeCell>
                            <NodeCell $value $selected={i === 0}>{i < 4 ? "B 0" : "B X"}</NodeCell>
                          </tr>
                        ))}
                      </tbody>
                    </NodeTable>
                  </Clip>
                  <Scroll size="69%" />
                </NodePane>
                <WavePane>
                  <WaveMain>
                    <TimeRuler />
                    <CursorStrip>0 ps<CursorHandle /></CursorStrip>
                    <WaveArea><Waveforms /></WaveArea>
                    <Scroll size="15%" />
                  </WaveMain>
                  <Scroll vertical size="100%" corner />
                </WavePane>
              </Panes>
            </WaveEditor>
          </EditorBody>
        </Editor>
      </Workspace>

      <Messages>
        <MessageGrip>
          <TinyButton aria-label="Close messages"><Cross /></TinyButton>
          <TinyButton aria-label="Expand messages"><Arrow dir="right" size={7} thick color="#808080" /></TinyButton>
          <GripLines />
          <VerticalTitle>Messages</VerticalTitle>
        </MessageGrip>
        <MessageMain>
          <MessageBody>
            <MessageTable>
              <thead><tr><MessageHead $narrow>Type</MessageHead><MessageHead>Message</MessageHead></tr></thead>
              <tbody>
                <tr>
                  <MessageCell><TypeLine><Expander /><InfoIcon /></TypeLine></MessageCell>
                  <MessageCell>Info: Option to preserve fewer signal transitions to reduce memory requirements is enabled</MessageCell>
                </tr>
                <tr>
                  <MessageCell><TypeLine><Slot $w={9} /><InfoIcon /></TypeLine></MessageCell>
                  <MessageCell>Info: Simulation partitioned into 1 sub-simulations</MessageCell>
                </tr>
              </tbody>
            </MessageTable>
            <Scroll vertical size="0%" />
          </MessageBody>
          <Scroll size="48%" corner />
          <MessageTabs>
            <TabEdge kind="first" />
            {messageTabs.map(([name, w], i) => (
              <React.Fragment key={name}>
                <MessageTab $w={w} $active={i === 1}>{name}</MessageTab>
                <TabEdge kind={i === 0 ? "intoActive" : i === 1 ? "outOfActive" : i === 8 ? "last" : undefined} />
              </React.Fragment>
            ))}
          </MessageTabs>
        </MessageMain>
      </Messages>
      <StatusBar>
        <StatusPart $w={147} />
        <StatusPart $w={22} $light />
        <StatusPart $w={22} $light />
        <StatusPart />
      </StatusBar>

      <Watermark>https://blog.csdn.net/bimbamboun</Watermark>
      <Gauge>
        <svg width="9" height="57" viewBox="0 0 9 57" aria-hidden="true">
          <path d="M3 45V4a3 3 0 0 1 6-1v53a6 6 0 0 1-6-11z" fill="#4a5a63" />
          <path d="M5 17h2v30H5z" fill="#2aa3e8" />
          <circle cx="6" cy="50" r="4" fill="#35b8ec" />
        </svg>
      </Gauge>
      <Ember>
        <svg width="22" height="5" viewBox="0 0 22 5" aria-hidden="true"><path d="M0 4l20-4 2 5H0z" fill="#ff6a3a" /></svg>
      </Ember>
    </Window>
  );
}
